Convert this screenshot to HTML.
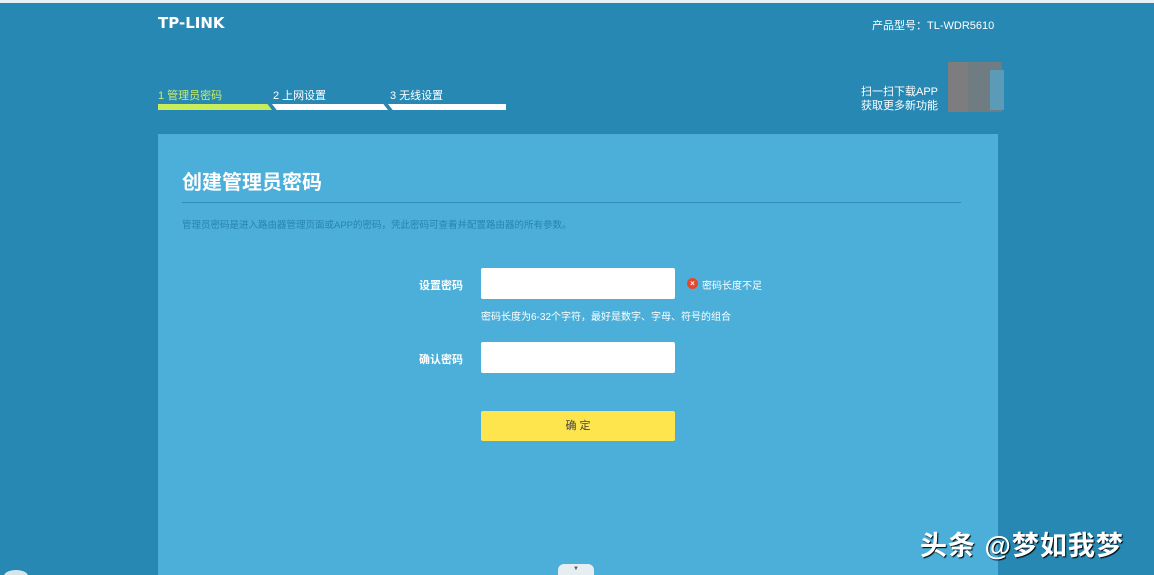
<!DOCTYPE html>
<html><head><meta charset="utf-8"><style>
*{margin:0;padding:0;box-sizing:border-box}
html,body{width:1154px;height:575px;overflow:hidden}
body{background:#2788b3;font-family:"Liberation Sans","Noto Sans CJK SC",sans-serif;position:relative;color:#fff}
.a{position:absolute}
</style></head><body>
<div class="a" style="left:0;top:0;width:1154px;height:3px;background:#e8f2f6"></div>
<div class="a" style="left:158px;top:14px;font-size:15px;font-weight:bold;font-family:'DejaVu Sans',sans-serif">TP-LINK</div>
<div class="a" style="left:872px;top:17px;font-size:11px">产品型号：TL-WDR5610</div>
<div class="a" style="left:158px;top:87px;font-size:11px;color:#c8ec6a">1 管理员密码</div>
<div class="a" style="left:273px;top:87px;font-size:11px">2 上网设置</div>
<div class="a" style="left:390px;top:87px;font-size:11px">3 无线设置</div>
<div class="a" style="left:158px;top:104px;width:114px;height:6px;background:#c8ec5a;clip-path:polygon(0 0,96% 0,100% 100%,0 100%)"></div>
<div class="a" style="left:272px;top:104px;width:116px;height:6px;background:#fff;clip-path:polygon(0 0,96% 0,100% 100%,4% 100%)"></div>
<div class="a" style="left:388px;top:104px;width:118px;height:6px;background:#fff;clip-path:polygon(0 0,100% 0,100% 100%,4% 100%)"></div>
<div class="a" style="left:858px;top:85px;font-size:11px;line-height:14px;text-align:right;width:80px">扫一扫下载APP<br>获取更多新功能</div>
<div class="a" style="left:948px;top:62px;width:54px;height:50px;background:#6f7c82"></div>
<div class="a" style="left:948px;top:62px;width:20px;height:50px;background:#7d7c7e"></div>
<div class="a" style="left:990px;top:70px;width:14px;height:40px;background:#5b9bb8"></div>
<div class="a" style="left:158px;top:134px;width:840px;height:441px;background:#4bafd9"></div>
<div class="a" style="left:182px;top:166px;font-size:20px;font-weight:bold">创建管理员密码</div>
<div class="a" style="left:182px;top:202px;width:779px;height:1px;background:#2f8fba"></div>
<div class="a" style="left:182px;top:217px;font-size:9.5px;color:#2685b0">管理员密码是进入路由器管理页面或APP的密码，凭此密码可查看并配置路由器的所有参数。</div>
<div class="a" style="left:419px;top:277px;font-size:11px;font-weight:bold">设置密码</div>
<div class="a" style="left:481px;top:268px;width:194px;height:31px;background:#fff;border-radius:2px"></div>
<div class="a" style="left:687px;top:278px;width:11px;height:11px;border-radius:50%;background:#e2492e;font-size:8px;line-height:11px;text-align:center;font-weight:bold">×</div>
<div class="a" style="left:702px;top:277px;font-size:10px">密码长度不足</div>
<div class="a" style="left:481px;top:308px;font-size:10px">密码长度为6-32个字符，最好是数字、字母、符号的组合</div>
<div class="a" style="left:419px;top:351px;font-size:11px;font-weight:bold">确认密码</div>
<div class="a" style="left:481px;top:342px;width:194px;height:31px;background:#fff;border-radius:2px"></div>
<div class="a" style="left:481px;top:411px;width:194px;height:30px;background:#fee54e;border-radius:2px;color:#444;font-size:11px;text-align:center;line-height:30px">确 定</div>
<div class="a" style="left:558px;top:564px;width:36px;height:11px;background:#e6eef2;border-radius:6px 6px 0 0;font-size:6px;color:#555;text-align:center;line-height:11px">▼</div>
<div class="a" style="left:920px;top:524px;font-size:27px;font-weight:bold;color:#fff;text-shadow:1px 1px 1px #000;letter-spacing:1px">头条 @梦如我梦</div>
<div class="a" style="left:4px;top:570px;width:24px;height:12px;border-radius:50%;background:#d8e4ea"></div>
</body></html>
